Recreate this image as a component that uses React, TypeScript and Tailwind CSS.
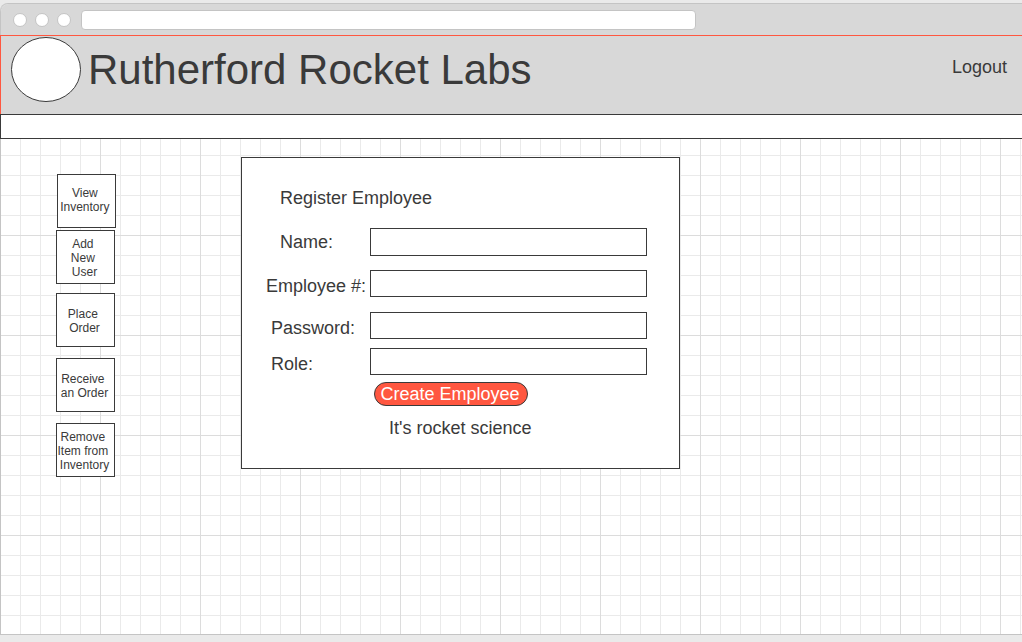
const actions = [
  { text: 'View \nInventory ', style: 'ml-px pb-0.5' },
  { text: 'Add \nNew \nUser', style: 'mt-0.5 pt-0.5 pr-0.5' },
  { text: 'Place \nOrder', style: 'mt-[9px] pt-0.5 pr-0.5' },
  { text: 'Receive \nan Order', style: 'mt-[11px] pt-0.5 pr-0.5' },
  { text: 'Remove \nItem from \nInventory', style: 'mt-[11px] pt-0.5 pr-0.5' },
];

const fields = [
  { id: 'name', label: 'Name:', type: 'text', row: '', labelStyle: 'pl-[14px]', inputStyle: 'h-7' },
  { id: 'employee-number', label: 'Employee #:', type: 'text', row: 'mt-[14px]', labelStyle: 'pt-1', inputStyle: 'h-[27px]' },
  { id: 'password', label: 'Password:', type: 'password', row: 'mt-[15px]', labelStyle: 'pl-[5px] pt-1', inputStyle: 'h-[27px]' },
  { id: 'role', label: 'Role:', type: 'text', row: 'mt-[9px]', labelStyle: 'pl-[5px] pt-1', inputStyle: 'h-[27px]' },
];

function BrowserBar() {
  return (
    <div className="flex h-[31px] items-center rounded-tl-lg bg-[#d8d8d8] pl-3">
      <div className="flex shrink-0 gap-2">
        <span className="size-3.5 rounded-full border border-[#c4c4c4] bg-white" />
        <span className="size-3.5 rounded-full border border-[#c4c4c4] bg-white" />
        <span className="size-3.5 rounded-full border border-[#c4c4c4] bg-white" />
      </div>
      <input
        type="text"
        aria-label="Address"
        className="ml-[10px] h-5 w-[61%] max-w-[615px] rounded border border-[#c4c4c4] bg-white px-2 text-xs outline-none"
      />
    </div>
  );
}

function SiteHeader() {
  return (
    <header className="flex h-[79px] items-start border-t border-l border-[#ff5740] bg-[#d8d8d8] pr-[15px] pl-[10px]">
      <svg className="mt-px h-[65px] w-[70px] shrink-0" viewBox="0 0 70 65" aria-hidden="true">
        <ellipse cx="35" cy="32.5" rx="34.5" ry="32" fill="#fff" stroke="#3a3a3a" />
      </svg>
      <h1 className="ml-[7px] pt-[10px] text-[42px] leading-[48px]">Rutherford Rocket Labs</h1>
      <a href="#logout" className="mt-5 ml-auto text-lg leading-[22px]">
        Logout
      </a>
    </header>
  );
}

export default function App() {
  return (
    <div className="flex min-h-screen flex-col bg-[#eaeaea] pt-[3px] pb-[7px] font-['Liberation_Sans',sans-serif] text-[#3a3a3a]">
      <div className="flex grow flex-col rounded-tl-lg border-t border-b border-[#c4c4c4]">
        <div className="rounded-tl-lg border-l border-[#c4c4c4]">
          <BrowserBar />
        </div>
        <SiteHeader />
        <div className="h-[25px] border-y border-l border-[#3a3a3a] bg-white" />
        <main className="flex grow items-start border-l border-[#c4c4c4] bg-white bg-[linear-gradient(to_right,#dcdcdc_1px,transparent_1px),linear-gradient(to_bottom,#dcdcdc_1px,transparent_1px),linear-gradient(to_right,#eaeaea_1px,transparent_1px),linear-gradient(to_bottom,#eaeaea_1px,transparent_1px)] bg-[size:100px_100px,100px_100px,20px_20px,20px_20px] bg-[position:99px_96px,99px_96px,19px_16px,19px_16px] pt-[18px] pl-[55px]">
          <nav className="flex w-[60px] shrink-0 flex-col pt-[17px]">
            {actions.map((action) => (
              <button
                key={action.text}
                type="button"
                className={`flex h-[54px] w-[59px] items-center justify-center border border-[#3a3a3a] bg-white text-center text-xs leading-[14px] whitespace-pre ${action.style}`}
              >
                {action.text}
              </button>
            ))}
          </nav>
          <form className="ml-[125px] w-[439px] border border-[#3a3a3a] bg-white pt-[29px] pr-8 pb-[29px] pl-6 text-lg leading-[22px]">
            <h2 className="pl-[14px]">Register Employee</h2>
            <div className="mt-[19px]">
              {fields.map((field) => (
                <div key={field.id} className={`flex items-center ${field.row}`}>
                  <label htmlFor={field.id} className={`w-[104px] shrink-0 whitespace-nowrap ${field.labelStyle}`}>
                    {field.label}
                  </label>
                  <input
                    id={field.id}
                    type={field.type}
                    className={`min-w-0 grow border border-[#3a3a3a] bg-white px-2 outline-none ${field.inputStyle}`}
                  />
                </div>
              ))}
            </div>
            <button
              type="button"
              className="mt-[7px] ml-[108px] block h-6 w-[154px] rounded-full border border-[#3a3a3a] bg-[#ff5740] pr-0.5 leading-[22px] text-white"
            >
              Create Employee
            </button>
            <p className="mt-[11px] pl-[123px]">It's rocket science</p>
          </form>
        </main>
      </div>
    </div>
  );
}
